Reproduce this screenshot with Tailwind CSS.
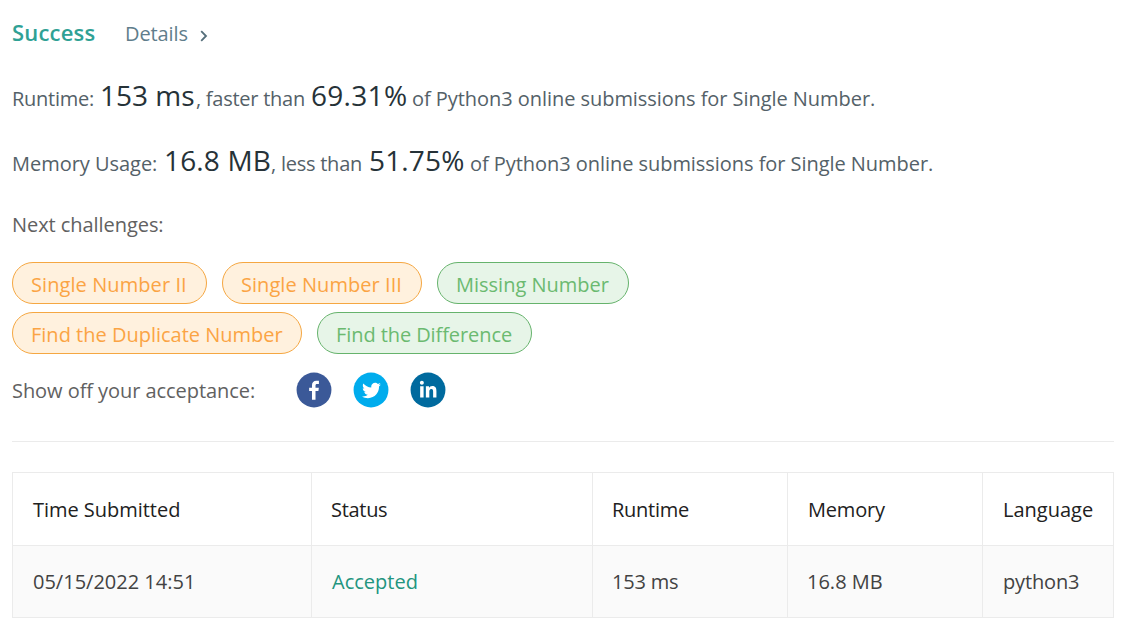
<!DOCTYPE html>
<html lang="en">
<head>
<meta charset="utf-8">
<title>Submission Result</title>
<script src="https://cdn.jsdelivr.net/npm/@tailwindcss/browser@4"></script>
</head>
<body class="bg-white font-['Open_Sans','Noto_Sans',sans-serif] text-[20px] leading-[30px] text-[#616161] whitespace-nowrap">
<main class="w-[1114px] pl-3 pt-[17px]">
  <header class="flex h-[30px] items-baseline">
    <h1 class="w-[113px] text-[22px] font-semibold tracking-[0.2px] text-[#2fa195]">Success</h1>
    <a class="flex items-center tracking-[-0.1px] text-[#607d8b]">Details
      <svg class="ml-[12px] mt-[3px] h-3 w-2" viewBox="0 0 8 12" fill="none" stroke="#546e7a" stroke-width="1.8"><path d="M1.2 1.2 6 6 1.2 10.8"/></svg>
    </a>
  </header>

  <section class="pt-[27px] text-[#546168]">
    <p class="flex h-[65px] items-baseline leading-[42px]">
      <span class="w-[88px] tracking-[-0.26px]">Runtime:</span>
      <span class="w-[96px] text-[28px] text-[#263238]">153 ms</span>
      <span class="w-[115px] tracking-[-0.25px]">, faster than</span>
      <span class="w-[101px] text-[28px] tracking-[0.3px] text-[#263238]">69.31%</span>
      <span class="tracking-[-0.05px]">of Python3 online submissions for Single Number.</span>
    </p>
    <p class="flex h-[71px] items-baseline leading-[42px]">
      <span class="w-[152px] tracking-[-0.03px]">Memory Usage:</span>
      <span class="w-[107px] text-[28px] tracking-[0.15px] text-[#263238]">16.8 MB</span>
      <span class="w-[98px] tracking-[-0.24px]">, less than</span>
      <span class="w-[101px] text-[28px] tracking-[0.15px] text-[#263238]">51.75%</span>
      <span class="tracking-[-0.05px]">of Python3 online submissions for Single Number.</span>
    </p>
  </section>

  <section>
    <h2 class="mb-[22px] tracking-[-0.06px]">Next challenges:</h2>
    <div class="flex flex-col gap-2 leading-[40px]">
      <div class="flex gap-[15px]">
        <a class="h-[42px] w-[195px] rounded-full border border-[#f5a742] bg-[#fff1de] pl-[18px] pt-0.5 tracking-[0.08px] text-[#fba444]">Single Number II</a>
        <a class="h-[42px] w-[200px] rounded-full border border-[#f5a742] bg-[#fff1de] pl-[18px] pt-0.5 tracking-[0.05px] text-[#fba444]">Single Number III</a>
        <a class="h-[42px] w-[192px] rounded-full border border-[#66b36c] bg-[#e7f5e8] pl-[18px] pt-0.5 text-[#6bba70]">Missing Number</a>
      </div>
      <div class="flex gap-[15px]">
        <a class="h-[42px] w-[290px] rounded-full border border-[#f5a742] bg-[#fff1de] pl-[18px] pt-0.5 text-[#fba444]">Find the Duplicate Number</a>
        <a class="h-[42px] w-[215px] rounded-full border border-[#66b36c] bg-[#e7f5e8] pl-[18px] pt-0.5 tracking-[-0.08px] text-[#6bba70]">Find the Difference</a>
      </div>
    </div>
  </section>

  <section class="mt-[18px] flex h-9 items-center">
    <span class="w-[284px] pt-0.5 tracking-[-0.06px]">Show off your acceptance:</span>
    <div class="flex gap-[21px]">
      <svg class="size-9" viewBox="0 0 64 64"><circle cx="32" cy="32" r="31" fill="#3b5998"/><path fill="#fff" transform="translate(-3.5 -3.5) scale(1.12)" d="M34.1 47V33.3h4.6l.7-5.3h-5.3v-3.4c0-1.5.4-2.6 2.6-2.6h2.8v-4.8c-.5-.1-2.2-.2-4.1-.2-4.1 0-6.9 2.5-6.9 7V28H24v5.3h4.5V47h5.6z"/></svg>
      <svg class="size-9" viewBox="0 0 64 64"><circle cx="32" cy="32" r="31" fill="#00aced"/><path fill="#fff" transform="translate(-.8 -.8) scale(1.05)" d="M48 22.1c-1.2.5-2.4.9-3.8 1 1.4-.8 2.4-2.1 2.9-3.6-1.3.8-2.7 1.3-4.2 1.6C41.7 19.8 40 19 38.2 19c-3.6 0-6.6 2.9-6.6 6.6 0 .5.1 1 .2 1.5-5.5-.3-10.3-2.9-13.5-6.9-.6 1-.9 2.1-.9 3.3 0 2.3 1.2 4.3 2.9 5.5-1.1 0-2.1-.3-3-.8v.1c0 3.2 2.3 5.8 5.3 6.4-.6.1-1.1.2-1.7.2-.4 0-.8 0-1.2-.1.8 2.6 3.3 4.5 6.1 4.6-2.2 1.8-5.1 2.8-8.2 2.8-.5 0-1.1 0-1.6-.1 2.9 1.9 6.4 2.9 10.1 2.9 12.1 0 18.7-10 18.7-18.7v-.8c1.2-1 2.3-2.1 3.2-3.4z"/></svg>
      <svg class="size-9" viewBox="0 0 64 64"><circle cx="32" cy="32" r="31" fill="#006a9e"/><path fill="#fff" transform="translate(-5 -4.6) scale(1.13)" d="M20.4 44h5.4V26.6h-5.4V44zm2.7-26c-1.7 0-3.1 1.4-3.1 3.1 0 1.7 1.4 3.1 3.1 3.1 1.7 0 3.1-1.4 3.1-3.1 0-1.7-1.4-3.1-3.1-3.1zm11.5 8.6h-5.2V44h5.4v-8.6c0-2.3.4-4.5 3.2-4.5 2.8 0 2.8 2.6 2.8 4.6V44H46v-9.5c0-4.7-1-8.3-6.5-8.3-2.6 0-4.4 1.4-5.1 2.8h-.1v-2.4z"/></svg>
    </div>
  </section>

  <hr class="mt-[33px] border-[#ebebeb]">

  <table class="mt-[30px] h-[146px] w-[1102px] table-fixed border-collapse border border-[#ebebeb] text-left">
    <colgroup><col class="w-[299px]"><col class="w-[281px]"><col class="w-[195px]"><col class="w-[195px]"><col></colgroup>
    <thead>
      <tr class="h-[73px] text-[#212121]">
        <th class="border border-[#ebebeb] p-0 pt-0.5 pl-5 font-normal tracking-[-0.03px]">Time Submitted</th>
        <th class="border border-[#ebebeb] p-0 pt-0.5 pl-[19px] font-normal tracking-[-0.3px]">Status</th>
        <th class="border border-[#ebebeb] p-0 pt-0.5 pl-[19px] font-normal tracking-[-0.26px]">Runtime</th>
        <th class="border border-[#ebebeb] p-0 pt-0.5 pl-5 font-normal tracking-[-0.19px]">Memory</th>
        <th class="border border-[#ebebeb] p-0 pt-0.5 pl-5 font-normal">Language</th>
      </tr>
    </thead>
    <tbody>
      <tr class="h-[72px] bg-[#fafafa] text-[#424242]">
        <td class="border border-[#ebebeb] p-0 pl-5">05/15/2022 14:51</td>
        <td class="border border-[#ebebeb] p-0 pl-5 text-[#22957f]">Accepted</td>
        <td class="border border-[#ebebeb] p-0 pl-[19px] tracking-[-0.2px]">153 ms</td>
        <td class="border border-[#ebebeb] p-0 pl-[19px]">16.8 MB</td>
        <td class="border border-[#ebebeb] p-0 pl-5 tracking-[-0.16px]">python3</td>
      </tr>
    </tbody>
  </table>
</main>
</body>
</html>
